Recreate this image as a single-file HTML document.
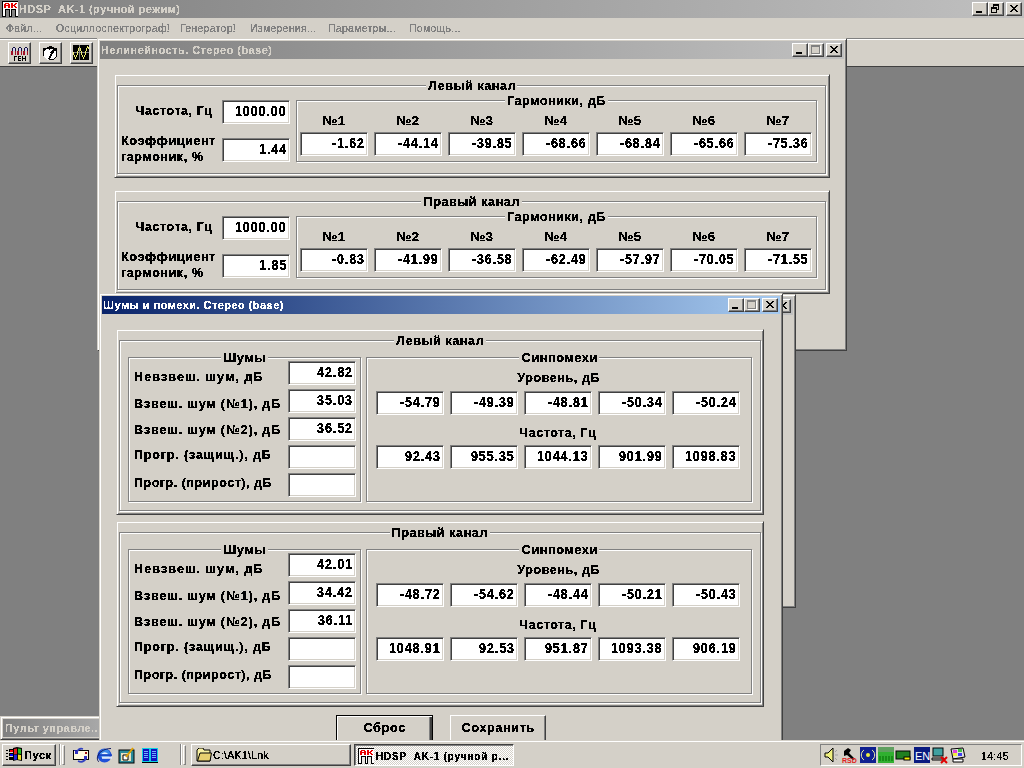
<!DOCTYPE html><html><head><meta charset="utf-8"><style>
*{box-sizing:content-box}
html,body{margin:0;padding:0}
body{width:1024px;height:768px;overflow:hidden;position:relative;background:#d4d0c8;font-family:"Liberation Sans",sans-serif;color:#000}
div{position:absolute}
i{font-style:normal;display:inline-block;white-space:pre}
.cb{width:14px;height:12px;background:#d4d0c8;border:1px solid;border-color:#fff #404040 #404040 #fff;box-shadow:inset -1px -1px #808080}
.ed{background:#fff;border:1px solid;border-color:#808080 #fff #fff #808080;box-shadow:inset 1px 1px #404040,inset -1px -1px #d4d0c8;font-weight:bold;font-size:14px;line-height:22px;text-align:right}
.ed span{filter:url(#crisp);position:absolute;right:3px;top:-1px}
.gt{text-align:center;font-weight:bold;font-size:13.5px;line-height:16px;height:16px}
.gt span{background:#d4d0c8;padding:0 2px;display:inline-block}.gt b{filter:url(#crisp);display:inline-block;font-weight:bold}
.lb{filter:url(#crisp);font-weight:bold;font-size:13.5px;line-height:16px;white-space:nowrap}
.cap{filter:url(#crisp3);font-weight:bold;font-size:11.8px;line-height:18px;white-space:nowrap}
.menu{filter:url(#crisp);font-size:11px;color:#808080;line-height:20px;top:18px}
</style></head><body>
<svg width="0" height="0" style="position:absolute"><filter id="crisp" color-interpolation-filters="sRGB"><feComponentTransfer><feFuncA type="discrete" tableValues="0 0 0 1 1 1 1 1 1 1"/></feComponentTransfer></filter><filter id="crisp2" color-interpolation-filters="sRGB"><feComponentTransfer><feFuncA type="discrete" tableValues="0 0 0 0 0 1 1 1 1 1"/></feComponentTransfer></filter><filter id="crisp3" color-interpolation-filters="sRGB"><feComponentTransfer><feFuncA type="discrete" tableValues="0 0 0 0 1 1 1 1 1 1"/></feComponentTransfer></filter></svg>

<div style="position:absolute;left:0px;top:0px;width:1024px;height:18px;background:linear-gradient(to right,#808080,#c0c0c0)"></div>
<svg style="position:absolute;left:2px;top:1px" width="16" height="16" shape-rendering="crispEdges"><rect x="1" y="1" width="15" height="14" fill="#fff"/><rect x="4" y="9" width="3" height="7" fill="#828282"/><rect x="10" y="9" width="3" height="7" fill="#828282"/><path d="M0 0h16v1H0zM0 0h1v16H0zM3 8h5v1H3zM3 8h1v8H3zM7 8h1v8H7zM9 8h5v1H9zM9 8h1v8H9zM13 8h1v8h-1zM0 15h4v1H0zM7 15h3v1H7zM13 15h3v1h-3z" fill="#000"/><path d="M3 2h1v1h-1zM4 2h1v1h-1zM5 2h1v1h-1zM6 2h1v1h-1zM2 3h1v1h-1zM3 3h1v1h-1zM6 3h1v1h-1zM7 3h1v1h-1zM2 4h1v1h-1zM3 4h1v1h-1zM4 4h1v1h-1zM5 4h1v1h-1zM6 4h1v1h-1zM7 4h1v1h-1zM2 5h1v1h-1zM3 5h1v1h-1zM6 5h1v1h-1zM7 5h1v1h-1zM2 6h1v1h-1zM3 6h1v1h-1zM6 6h1v1h-1zM7 6h1v1h-1zM9 2h1v1h-1zM10 2h1v1h-1zM13 2h1v1h-1zM14 2h1v1h-1zM9 3h1v1h-1zM10 3h1v1h-1zM12 3h1v1h-1zM13 3h1v1h-1zM9 4h1v1h-1zM10 4h1v1h-1zM11 4h1v1h-1zM12 4h1v1h-1zM9 5h1v1h-1zM10 5h1v1h-1zM12 5h1v1h-1zM13 5h1v1h-1zM9 6h1v1h-1zM10 6h1v1h-1zM13 6h1v1h-1zM14 6h1v1h-1z" fill="#e80000"/></svg>
<div class="cap" style="left:19px;top:0;color:#d4d0c8"><i style="letter-spacing:0.500px;transform:scaleX(0.9306);transform-origin:0 50%;margin-right:-12.035px">HDSP  AK-1 (ручной режим)</i></div>
<div class="cb" style="left:972px;top:2px"><svg width="16" height="14" style="position:absolute;left:-1px;top:-1px" shape-rendering="crispEdges"><rect x="4" y="9" width="6" height="2" fill="#000"/></svg></div>
<div class="cb" style="left:988px;top:2px"><svg width="16" height="14" style="position:absolute;left:-1px;top:-1px" shape-rendering="crispEdges"><path d="M5 2h1v1h-1zM6 2h1v1h-1zM7 2h1v1h-1zM8 2h1v1h-1zM9 2h1v1h-1zM10 2h1v1h-1zM5 3h1v1h-1zM6 3h1v1h-1zM7 3h1v1h-1zM8 3h1v1h-1zM9 3h1v1h-1zM10 3h1v1h-1zM5 4h1v1h-1zM10 4h1v1h-1zM3 5h1v1h-1zM4 5h1v1h-1zM5 5h1v1h-1zM6 5h1v1h-1zM7 5h1v1h-1zM8 5h1v1h-1zM10 5h1v1h-1zM3 6h1v1h-1zM4 6h1v1h-1zM5 6h1v1h-1zM6 6h1v1h-1zM7 6h1v1h-1zM8 6h1v1h-1zM10 6h1v1h-1zM3 7h1v1h-1zM8 7h1v1h-1zM9 7h1v1h-1zM10 7h1v1h-1zM3 8h1v1h-1zM8 8h1v1h-1zM3 9h1v1h-1zM8 9h1v1h-1zM3 10h1v1h-1zM4 10h1v1h-1zM5 10h1v1h-1zM6 10h1v1h-1zM7 10h1v1h-1zM8 10h1v1h-1z" fill="#000"/></svg></div>
<div class="cb" style="left:1006px;top:2px"><svg width="16" height="14" style="position:absolute;left:-1px;top:-1px" shape-rendering="crispEdges"><path d="M4 3h1v1h-1zM5 3h1v1h-1zM10 3h1v1h-1zM11 3h1v1h-1zM5 4h1v1h-1zM6 4h1v1h-1zM9 4h1v1h-1zM10 4h1v1h-1zM6 5h1v1h-1zM7 5h1v1h-1zM8 5h1v1h-1zM9 5h1v1h-1zM7 6h1v1h-1zM8 6h1v1h-1zM6 7h1v1h-1zM7 7h1v1h-1zM8 7h1v1h-1zM9 7h1v1h-1zM5 8h1v1h-1zM6 8h1v1h-1zM9 8h1v1h-1zM10 8h1v1h-1zM4 9h1v1h-1zM5 9h1v1h-1zM10 9h1v1h-1zM11 9h1v1h-1z" fill="#000"/></svg></div>
<div class="menu" style="left:6px"><i style="letter-spacing:0.300px;transform:scaleX(0.9527);transform-origin:0 50%;margin-right:-1.814px">Файл...</i></div>
<div class="menu" style="left:56px"><i style="letter-spacing:0.300px;transform:scaleX(0.9547);transform-origin:0 50%;margin-right:-5.414px">Осциллоспектрограф!</i></div>
<div class="menu" style="left:180px"><i style="letter-spacing:0.300px;transform:scaleX(0.9538);transform-origin:0 50%;margin-right:-2.714px">Генератор!</i></div>
<div class="menu" style="left:250px"><i style="letter-spacing:0.300px;transform:scaleX(0.9525);transform-origin:0 50%;margin-right:-3.314px">Измерения...</i></div>
<div class="menu" style="left:328px"><i style="letter-spacing:0.300px;transform:scaleX(0.9536);transform-origin:0 50%;margin-right:-3.314px">Параметры...</i></div>
<div class="menu" style="left:409px"><i style="letter-spacing:0.300px;transform:scaleX(0.9556);transform-origin:0 50%;margin-right:-2.413px">Помощь...</i></div>
<div style="position:absolute;left:0px;top:38px;width:1024px;height:1px;background:#808080"></div>
<div style="position:absolute;left:0px;top:39px;width:1024px;height:1px;background:#fff"></div>
<div style="left:8px;top:42px;width:21px;height:20px;border:1px solid;border-color:#fff #404040 #404040 #fff;box-shadow:inset -1px -1px #808080"></div>
<div style="left:39px;top:42px;width:21px;height:20px;border:1px solid;border-color:#fff #404040 #404040 #fff;box-shadow:inset -1px -1px #808080"></div>
<div style="left:70px;top:42px;width:21px;height:20px;border:1px solid;border-color:#fff #404040 #404040 #fff;box-shadow:inset -1px -1px #808080"></div>
<svg style="position:absolute;left:8px;top:42px" width="23" height="22" shape-rendering="crispEdges"><rect x="5" y="5" width="2" height="1" fill="#101040"/><rect x="4" y="6" width="1" height="3" fill="#101040"/><rect x="7" y="6" width="1" height="3" fill="#101040"/><rect x="5" y="6" width="2" height="3" fill="#d8d0f0"/><rect x="3" y="9" width="2" height="4" fill="#a01028"/><rect x="7" y="9" width="1" height="4" fill="#a01028"/><rect x="11" y="5" width="2" height="1" fill="#101040"/><rect x="10" y="6" width="1" height="3" fill="#101040"/><rect x="13" y="6" width="1" height="3" fill="#101040"/><rect x="11" y="6" width="2" height="3" fill="#d8d0f0"/><rect x="9" y="9" width="2" height="4" fill="#a01028"/><rect x="13" y="9" width="1" height="4" fill="#a01028"/><rect x="17" y="5" width="2" height="1" fill="#101040"/><rect x="16" y="6" width="1" height="3" fill="#101040"/><rect x="19" y="6" width="1" height="3" fill="#101040"/><rect x="17" y="6" width="2" height="3" fill="#d8d0f0"/><rect x="15" y="9" width="2" height="4" fill="#a01028"/><rect x="19" y="9" width="1" height="4" fill="#a01028"/><g fill="#000"><path d="M6 14h3v1H7v4H6z"/><path d="M10 14h3v1h-2v1h2v1h-2v1h2v1h-3z"/><path d="M14 14h1v2h2v-2h1v5h-1v-2h-2v2h-1z"/></g></svg>
<svg style="position:absolute;left:39px;top:42px" width="23" height="22" shape-rendering="crispEdges"><path d="M4 6h4v-1h2v-1h3v1h2v1h3v9h-1v1h-1v1h-1v1H8v-1H7v-1H6v-1H5v-1H4z" fill="#000"/><path d="M5 9h1v-1h1v-1h3v1h1v-1h3v1h-1v1h-1v1h-1v1h1v1h-1v2h-1v2h-1v1h1v1H8v-1H7v-1H6v-1H5z" fill="#fff"/><path d="M15 9h2v6h-1v1h-1v1h-4v-1h1v-2h1v-2h1v-1h1z" fill="#fff"/></svg>
<svg style="position:absolute;left:70px;top:42px" width="23" height="22" shape-rendering="crispEdges"><rect x="3" y="3" width="16" height="15" fill="#000"/><rect x="9" y="3" width="1" height="15" fill="#808080"/><rect x="3" y="10" width="16" height="1" fill="#808080"/><path d="M3 10h1v2h1v3h1v2h1v-2h1v-4h1v-4h1v-1h1v1h1v4h1v4h1v2h1v-2h1v-4h1v-4h1v-1h1v1h-1v0" fill="none"/><g fill="#f0f070"><path d="M3 10h1v3H3z"/><path d="M4 13h1v2H4z"/><path d="M5 15h1v2H5z"/><path d="M6 13h1v2H6z"/><path d="M7 9h1v4H7z"/><path d="M8 6h1v3H8z"/><path d="M9 5h1v1H9z"/><path d="M10 6h1v3h-1z"/><path d="M11 9h1v4h-1z"/><path d="M12 13h1v2h-1z"/><path d="M13 15h1v2h-1z"/><path d="M14 13h1v2h-1z"/><path d="M15 9h1v4h-1z"/><path d="M16 6h1v3h-1z"/><path d="M17 4h1v2h-1z"/><path d="M18 5h1v2h-1z"/></g></svg>
<div style="position:absolute;left:0px;top:66px;width:1024px;height:1px;background:#404040"></div>
<div style="position:absolute;left:0px;top:67px;width:1024px;height:674px;background:#808080"></div>
<div style="position:absolute;left:97px;top:38px;width:748px;height:311px;background:#d4d0c8;border:1px solid;border-color:#d4d0c8 #404040 #404040 #d4d0c8;box-shadow:inset 1px 1px #fff,inset -1px -1px #808080"></div>
<div style="position:absolute;left:100px;top:41px;width:744px;height:18px;background:linear-gradient(to right,#808080,#c0c0c0)"></div>
<div class="cap" style="left:101px;top:41px;color:#d4d0c8"><i style="letter-spacing:0.500px;transform:scaleX(0.9293);transform-origin:0 50%;margin-right:-13.035px">Нелинейность. Стерео (base)</i></div>
<div class="cb" style="left:826px;top:43px"><svg width="16" height="14" style="position:absolute;left:-1px;top:-1px" shape-rendering="crispEdges"><path d="M4 3h1v1h-1zM5 3h1v1h-1zM10 3h1v1h-1zM11 3h1v1h-1zM5 4h1v1h-1zM6 4h1v1h-1zM9 4h1v1h-1zM10 4h1v1h-1zM6 5h1v1h-1zM7 5h1v1h-1zM8 5h1v1h-1zM9 5h1v1h-1zM7 6h1v1h-1zM8 6h1v1h-1zM6 7h1v1h-1zM7 7h1v1h-1zM8 7h1v1h-1zM9 7h1v1h-1zM5 8h1v1h-1zM6 8h1v1h-1zM9 8h1v1h-1zM10 8h1v1h-1zM4 9h1v1h-1zM5 9h1v1h-1zM10 9h1v1h-1zM11 9h1v1h-1z" fill="#000"/></svg></div>
<div class="cb" style="left:808px;top:43px"><svg width="16" height="14" style="position:absolute;left:-1px;top:-1px" shape-rendering="crispEdges"><path d="M3 2h1v1h-1zM4 2h1v1h-1zM5 2h1v1h-1zM6 2h1v1h-1zM7 2h1v1h-1zM8 2h1v1h-1zM9 2h1v1h-1zM10 2h1v1h-1zM11 2h1v1h-1zM3 3h1v1h-1zM4 3h1v1h-1zM5 3h1v1h-1zM6 3h1v1h-1zM7 3h1v1h-1zM8 3h1v1h-1zM9 3h1v1h-1zM10 3h1v1h-1zM11 3h1v1h-1zM3 4h1v1h-1zM11 4h1v1h-1zM3 5h1v1h-1zM11 5h1v1h-1zM3 6h1v1h-1zM11 6h1v1h-1zM3 7h1v1h-1zM11 7h1v1h-1zM3 8h1v1h-1zM11 8h1v1h-1zM3 9h1v1h-1zM11 9h1v1h-1zM3 10h1v1h-1zM4 10h1v1h-1zM5 10h1v1h-1zM6 10h1v1h-1zM7 10h1v1h-1zM8 10h1v1h-1zM9 10h1v1h-1zM10 10h1v1h-1zM11 10h1v1h-1z" fill="#808080"/><path d="M12 3h1v1h-1zM12 4h1v1h-1zM12 5h1v1h-1zM12 6h1v1h-1zM12 7h1v1h-1zM12 8h1v1h-1zM12 9h1v1h-1zM12 10h1v1h-1zM4 11h1v1h-1zM5 11h1v1h-1zM6 11h1v1h-1zM7 11h1v1h-1zM8 11h1v1h-1zM9 11h1v1h-1zM10 11h1v1h-1zM11 11h1v1h-1zM12 11h1v1h-1z" fill="#fff"/></svg></div>
<div class="cb" style="left:792px;top:43px"><svg width="16" height="14" style="position:absolute;left:-1px;top:-1px" shape-rendering="crispEdges"><rect x="4" y="9" width="6" height="2" fill="#000"/></svg></div>
<div style="position:absolute;left:114px;top:74px;width:714px;height:102px;background:#d4d0c8;border:1px solid;border-color:#d4d0c8 #404040 #404040 #d4d0c8;box-shadow:inset 1px 1px #fff,inset -1px -1px #808080"></div>
<div style="position:absolute;left:117px;top:85px;width:707px;height:87px;border:1px solid #808080;box-shadow:1px 1px #fff,inset 1px 1px #fff"></div>
<div class="gt" style="left:117px;top:78px;width:709px"><span><b><i style="letter-spacing:0.600px;transform:translateX(0.281px) scaleX(0.9357);transform-origin:50% 50%;margin:0 -3.019px">Левый канал</i></b></span></div>
<div class="lb" style="left:100px;width:112px;text-align:right;top:103px"><i style="letter-spacing:0.600px;transform:translateX(0.556px) scaleX(0.9272);transform-origin:100% 50%;margin-left:-6.044px">Частота, Гц</i></div>
<div class="ed" style="left:222px;top:100px;width:66px;height:22px"><span><i style="letter-spacing:1.000px;transform:translateX(0.894px) scaleX(0.8940);transform-origin:100% 50%;margin-left:-6.106px">1000.00</i></span></div>
<div class="lb" style="left:121px;top:133px"><i style="letter-spacing:0.600px;transform:scaleX(0.9403);transform-origin:0 50%;margin-right:-6.036px">Коэффициент</i></div>
<div class="lb" style="left:121px;top:149px"><i style="letter-spacing:0.600px;transform:scaleX(0.9318);transform-origin:0 50%;margin-right:-6.041px">гармоник, %</i></div>
<div class="ed" style="left:222px;top:138px;width:66px;height:22px"><span><i style="letter-spacing:1.000px;transform:translateX(0.901px) scaleX(0.9008);transform-origin:100% 50%;margin-left:-3.099px">1.44</i></span></div>
<div style="position:absolute;left:296px;top:100px;width:519px;height:60px;border:1px solid #808080;box-shadow:1px 1px #fff,inset 1px 1px #fff"></div>
<div class="gt" style="left:296px;top:93px;width:521px"><span><b><i style="letter-spacing:0.600px;transform:translateX(0.280px) scaleX(0.9318);transform-origin:50% 50%;margin:0 -3.620px">Гармоники, дБ</i></b></span></div>
<div class="lb" style="left:300px;width:68px;text-align:center;top:113px"><i style="letter-spacing:0.600px;transform:translateX(0.292px) scaleX(0.9741);transform-origin:50% 50%;margin:0 -0.308px">№1</i></div>
<div class="ed" style="left:300px;top:132px;width:66px;height:22px"><span><i style="letter-spacing:1.000px;transform:translateX(0.889px) scaleX(0.8886);transform-origin:100% 50%;margin-left:-4.111px">-1.62</i></span></div>
<div class="lb" style="left:374px;width:68px;text-align:center;top:113px"><i style="letter-spacing:0.600px;transform:translateX(0.292px) scaleX(0.9741);transform-origin:50% 50%;margin:0 -0.308px">№2</i></div>
<div class="ed" style="left:374px;top:132px;width:66px;height:22px"><span><i style="letter-spacing:1.000px;transform:translateX(0.888px) scaleX(0.8882);transform-origin:100% 50%;margin-left:-5.112px">-44.14</i></span></div>
<div class="lb" style="left:448px;width:68px;text-align:center;top:113px"><i style="letter-spacing:0.600px;transform:translateX(0.292px) scaleX(0.9741);transform-origin:50% 50%;margin:0 -0.308px">№3</i></div>
<div class="ed" style="left:448px;top:132px;width:66px;height:22px"><span><i style="letter-spacing:1.000px;transform:translateX(0.888px) scaleX(0.8882);transform-origin:100% 50%;margin-left:-5.112px">-39.85</i></span></div>
<div class="lb" style="left:522px;width:68px;text-align:center;top:113px"><i style="letter-spacing:0.600px;transform:translateX(0.292px) scaleX(0.9741);transform-origin:50% 50%;margin:0 -0.308px">№4</i></div>
<div class="ed" style="left:522px;top:132px;width:66px;height:22px"><span><i style="letter-spacing:1.000px;transform:translateX(0.888px) scaleX(0.8882);transform-origin:100% 50%;margin-left:-5.112px">-68.66</i></span></div>
<div class="lb" style="left:596px;width:68px;text-align:center;top:113px"><i style="letter-spacing:0.600px;transform:translateX(0.292px) scaleX(0.9741);transform-origin:50% 50%;margin:0 -0.308px">№5</i></div>
<div class="ed" style="left:596px;top:132px;width:66px;height:22px"><span><i style="letter-spacing:1.000px;transform:translateX(0.888px) scaleX(0.8882);transform-origin:100% 50%;margin-left:-5.112px">-68.84</i></span></div>
<div class="lb" style="left:670px;width:68px;text-align:center;top:113px"><i style="letter-spacing:0.600px;transform:translateX(0.292px) scaleX(0.9741);transform-origin:50% 50%;margin:0 -0.308px">№6</i></div>
<div class="ed" style="left:670px;top:132px;width:66px;height:22px"><span><i style="letter-spacing:1.000px;transform:translateX(0.888px) scaleX(0.8882);transform-origin:100% 50%;margin-left:-5.112px">-65.66</i></span></div>
<div class="lb" style="left:744px;width:68px;text-align:center;top:113px"><i style="letter-spacing:0.600px;transform:translateX(0.292px) scaleX(0.9741);transform-origin:50% 50%;margin:0 -0.308px">№7</i></div>
<div class="ed" style="left:744px;top:132px;width:66px;height:22px"><span><i style="letter-spacing:1.000px;transform:translateX(0.888px) scaleX(0.8882);transform-origin:100% 50%;margin-left:-5.112px">-75.36</i></span></div>
<div style="position:absolute;left:114px;top:190px;width:714px;height:102px;background:#d4d0c8;border:1px solid;border-color:#d4d0c8 #404040 #404040 #d4d0c8;box-shadow:inset 1px 1px #fff,inset -1px -1px #808080"></div>
<div style="position:absolute;left:117px;top:201px;width:707px;height:87px;border:1px solid #808080;box-shadow:1px 1px #fff,inset 1px 1px #fff"></div>
<div class="gt" style="left:117px;top:194px;width:709px"><span><b><i style="letter-spacing:0.600px;transform:translateX(0.281px) scaleX(0.9356);transform-origin:50% 50%;margin:0 -3.319px">Правый канал</i></b></span></div>
<div class="lb" style="left:100px;width:112px;text-align:right;top:219px"><i style="letter-spacing:0.600px;transform:translateX(0.556px) scaleX(0.9272);transform-origin:100% 50%;margin-left:-6.044px">Частота, Гц</i></div>
<div class="ed" style="left:222px;top:216px;width:66px;height:22px"><span><i style="letter-spacing:1.000px;transform:translateX(0.894px) scaleX(0.8940);transform-origin:100% 50%;margin-left:-6.106px">1000.00</i></span></div>
<div class="lb" style="left:121px;top:249px"><i style="letter-spacing:0.600px;transform:scaleX(0.9403);transform-origin:0 50%;margin-right:-6.036px">Коэффициент</i></div>
<div class="lb" style="left:121px;top:265px"><i style="letter-spacing:0.600px;transform:scaleX(0.9318);transform-origin:0 50%;margin-right:-6.041px">гармоник, %</i></div>
<div class="ed" style="left:222px;top:254px;width:66px;height:22px"><span><i style="letter-spacing:1.000px;transform:translateX(0.901px) scaleX(0.9008);transform-origin:100% 50%;margin-left:-3.099px">1.85</i></span></div>
<div style="position:absolute;left:296px;top:216px;width:519px;height:60px;border:1px solid #808080;box-shadow:1px 1px #fff,inset 1px 1px #fff"></div>
<div class="gt" style="left:296px;top:209px;width:521px"><span><b><i style="letter-spacing:0.600px;transform:translateX(0.280px) scaleX(0.9318);transform-origin:50% 50%;margin:0 -3.620px">Гармоники, дБ</i></b></span></div>
<div class="lb" style="left:300px;width:68px;text-align:center;top:229px"><i style="letter-spacing:0.600px;transform:translateX(0.292px) scaleX(0.9741);transform-origin:50% 50%;margin:0 -0.308px">№1</i></div>
<div class="ed" style="left:300px;top:248px;width:66px;height:22px"><span><i style="letter-spacing:1.000px;transform:translateX(0.889px) scaleX(0.8886);transform-origin:100% 50%;margin-left:-4.111px">-0.83</i></span></div>
<div class="lb" style="left:374px;width:68px;text-align:center;top:229px"><i style="letter-spacing:0.600px;transform:translateX(0.292px) scaleX(0.9741);transform-origin:50% 50%;margin:0 -0.308px">№2</i></div>
<div class="ed" style="left:374px;top:248px;width:66px;height:22px"><span><i style="letter-spacing:1.000px;transform:translateX(0.888px) scaleX(0.8882);transform-origin:100% 50%;margin-left:-5.112px">-41.99</i></span></div>
<div class="lb" style="left:448px;width:68px;text-align:center;top:229px"><i style="letter-spacing:0.600px;transform:translateX(0.292px) scaleX(0.9741);transform-origin:50% 50%;margin:0 -0.308px">№3</i></div>
<div class="ed" style="left:448px;top:248px;width:66px;height:22px"><span><i style="letter-spacing:1.000px;transform:translateX(0.888px) scaleX(0.8882);transform-origin:100% 50%;margin-left:-5.112px">-36.58</i></span></div>
<div class="lb" style="left:522px;width:68px;text-align:center;top:229px"><i style="letter-spacing:0.600px;transform:translateX(0.292px) scaleX(0.9741);transform-origin:50% 50%;margin:0 -0.308px">№4</i></div>
<div class="ed" style="left:522px;top:248px;width:66px;height:22px"><span><i style="letter-spacing:1.000px;transform:translateX(0.888px) scaleX(0.8882);transform-origin:100% 50%;margin-left:-5.112px">-62.49</i></span></div>
<div class="lb" style="left:596px;width:68px;text-align:center;top:229px"><i style="letter-spacing:0.600px;transform:translateX(0.292px) scaleX(0.9741);transform-origin:50% 50%;margin:0 -0.308px">№5</i></div>
<div class="ed" style="left:596px;top:248px;width:66px;height:22px"><span><i style="letter-spacing:1.000px;transform:translateX(0.888px) scaleX(0.8882);transform-origin:100% 50%;margin-left:-5.112px">-57.97</i></span></div>
<div class="lb" style="left:670px;width:68px;text-align:center;top:229px"><i style="letter-spacing:0.600px;transform:translateX(0.292px) scaleX(0.9741);transform-origin:50% 50%;margin:0 -0.308px">№6</i></div>
<div class="ed" style="left:670px;top:248px;width:66px;height:22px"><span><i style="letter-spacing:1.000px;transform:translateX(0.888px) scaleX(0.8882);transform-origin:100% 50%;margin-left:-5.112px">-70.05</i></span></div>
<div class="lb" style="left:744px;width:68px;text-align:center;top:229px"><i style="letter-spacing:0.600px;transform:translateX(0.292px) scaleX(0.9741);transform-origin:50% 50%;margin:0 -0.308px">№7</i></div>
<div class="ed" style="left:744px;top:248px;width:66px;height:22px"><span><i style="letter-spacing:1.000px;transform:translateX(0.888px) scaleX(0.8882);transform-origin:100% 50%;margin-left:-5.112px">-71.55</i></span></div>
<div style="position:absolute;left:600px;top:294px;width:194px;height:312px;background:#d4d0c8;border:1px solid;border-color:#d4d0c8 #404040 #404040 #d4d0c8;box-shadow:inset 1px 1px #fff,inset -1px -1px #808080"></div>
<div style="position:absolute;left:603px;top:297px;width:190px;height:18px;background:linear-gradient(to right,#808080,#c0c0c0)"></div>
<div class="cap" style="left:604px;top:297px;color:#d4d0c8"><i style="letter-spacing:0.500px;transform:scaleX(1.0000);transform-origin:0 50%;margin-right:-0.000px"></i></div>
<div class="cb" style="left:775px;top:299px"><svg width="16" height="14" style="position:absolute;left:-1px;top:-1px" shape-rendering="crispEdges"><path d="M4 3h1v1h-1zM5 3h1v1h-1zM10 3h1v1h-1zM11 3h1v1h-1zM5 4h1v1h-1zM6 4h1v1h-1zM9 4h1v1h-1zM10 4h1v1h-1zM6 5h1v1h-1zM7 5h1v1h-1zM8 5h1v1h-1zM9 5h1v1h-1zM7 6h1v1h-1zM8 6h1v1h-1zM6 7h1v1h-1zM7 7h1v1h-1zM8 7h1v1h-1zM9 7h1v1h-1zM5 8h1v1h-1zM6 8h1v1h-1zM9 8h1v1h-1zM10 8h1v1h-1zM4 9h1v1h-1zM5 9h1v1h-1zM10 9h1v1h-1zM11 9h1v1h-1z" fill="#000"/></svg></div>
<div class="cb" style="left:757px;top:299px"><svg width="16" height="14" style="position:absolute;left:-1px;top:-1px" shape-rendering="crispEdges"><path d="M3 2h1v1h-1zM4 2h1v1h-1zM5 2h1v1h-1zM6 2h1v1h-1zM7 2h1v1h-1zM8 2h1v1h-1zM9 2h1v1h-1zM10 2h1v1h-1zM11 2h1v1h-1zM3 3h1v1h-1zM4 3h1v1h-1zM5 3h1v1h-1zM6 3h1v1h-1zM7 3h1v1h-1zM8 3h1v1h-1zM9 3h1v1h-1zM10 3h1v1h-1zM11 3h1v1h-1zM3 4h1v1h-1zM11 4h1v1h-1zM3 5h1v1h-1zM11 5h1v1h-1zM3 6h1v1h-1zM11 6h1v1h-1zM3 7h1v1h-1zM11 7h1v1h-1zM3 8h1v1h-1zM11 8h1v1h-1zM3 9h1v1h-1zM11 9h1v1h-1zM3 10h1v1h-1zM4 10h1v1h-1zM5 10h1v1h-1zM6 10h1v1h-1zM7 10h1v1h-1zM8 10h1v1h-1zM9 10h1v1h-1zM10 10h1v1h-1zM11 10h1v1h-1z" fill="#808080"/><path d="M12 3h1v1h-1zM12 4h1v1h-1zM12 5h1v1h-1zM12 6h1v1h-1zM12 7h1v1h-1zM12 8h1v1h-1zM12 9h1v1h-1zM12 10h1v1h-1zM4 11h1v1h-1zM5 11h1v1h-1zM6 11h1v1h-1zM7 11h1v1h-1zM8 11h1v1h-1zM9 11h1v1h-1zM10 11h1v1h-1zM11 11h1v1h-1zM12 11h1v1h-1z" fill="#fff"/></svg></div>
<div class="cb" style="left:741px;top:299px"><svg width="16" height="14" style="position:absolute;left:-1px;top:-1px" shape-rendering="crispEdges"><rect x="4" y="9" width="6" height="2" fill="#000"/></svg></div>
<div style="position:absolute;left:0px;top:716px;width:159px;height:22px;background:#d4d0c8;border:1px solid;border-color:#d4d0c8 #404040 #404040 #d4d0c8;box-shadow:inset 1px 1px #fff,inset -1px -1px #808080"></div>
<div style="position:absolute;left:3px;top:719px;width:155px;height:18px;background:linear-gradient(to right,#808080,#c0c0c0)"></div>
<div class="cap" style="left:5px;top:719px;color:#d4d0c8"><i style="letter-spacing:0.500px;transform:scaleX(0.9298);transform-origin:0 50%;margin-right:-7.035px">Пульт управле..</i></div>
<div style="position:absolute;left:99px;top:293px;width:682px;height:466px;background:#d4d0c8;border:1px solid;border-color:#d4d0c8 #404040 #404040 #d4d0c8;box-shadow:inset 1px 1px #fff,inset -1px -1px #808080"></div>
<div style="position:absolute;left:102px;top:296px;width:678px;height:18px;background:linear-gradient(to right,#0a246a,#a6caf0)"></div>
<div class="cap" style="left:103px;top:296px;color:#fff"><i style="letter-spacing:0.500px;transform:scaleX(0.9304);transform-origin:0 50%;margin-right:-13.535px">Шумы и помехи. Стерео (base)</i></div>
<div class="cb" style="left:762px;top:298px"><svg width="16" height="14" style="position:absolute;left:-1px;top:-1px" shape-rendering="crispEdges"><path d="M4 3h1v1h-1zM5 3h1v1h-1zM10 3h1v1h-1zM11 3h1v1h-1zM5 4h1v1h-1zM6 4h1v1h-1zM9 4h1v1h-1zM10 4h1v1h-1zM6 5h1v1h-1zM7 5h1v1h-1zM8 5h1v1h-1zM9 5h1v1h-1zM7 6h1v1h-1zM8 6h1v1h-1zM6 7h1v1h-1zM7 7h1v1h-1zM8 7h1v1h-1zM9 7h1v1h-1zM5 8h1v1h-1zM6 8h1v1h-1zM9 8h1v1h-1zM10 8h1v1h-1zM4 9h1v1h-1zM5 9h1v1h-1zM10 9h1v1h-1zM11 9h1v1h-1z" fill="#000"/></svg></div>
<div class="cb" style="left:744px;top:298px"><svg width="16" height="14" style="position:absolute;left:-1px;top:-1px" shape-rendering="crispEdges"><path d="M3 2h1v1h-1zM4 2h1v1h-1zM5 2h1v1h-1zM6 2h1v1h-1zM7 2h1v1h-1zM8 2h1v1h-1zM9 2h1v1h-1zM10 2h1v1h-1zM11 2h1v1h-1zM3 3h1v1h-1zM4 3h1v1h-1zM5 3h1v1h-1zM6 3h1v1h-1zM7 3h1v1h-1zM8 3h1v1h-1zM9 3h1v1h-1zM10 3h1v1h-1zM11 3h1v1h-1zM3 4h1v1h-1zM11 4h1v1h-1zM3 5h1v1h-1zM11 5h1v1h-1zM3 6h1v1h-1zM11 6h1v1h-1zM3 7h1v1h-1zM11 7h1v1h-1zM3 8h1v1h-1zM11 8h1v1h-1zM3 9h1v1h-1zM11 9h1v1h-1zM3 10h1v1h-1zM4 10h1v1h-1zM5 10h1v1h-1zM6 10h1v1h-1zM7 10h1v1h-1zM8 10h1v1h-1zM9 10h1v1h-1zM10 10h1v1h-1zM11 10h1v1h-1z" fill="#808080"/><path d="M12 3h1v1h-1zM12 4h1v1h-1zM12 5h1v1h-1zM12 6h1v1h-1zM12 7h1v1h-1zM12 8h1v1h-1zM12 9h1v1h-1zM12 10h1v1h-1zM4 11h1v1h-1zM5 11h1v1h-1zM6 11h1v1h-1zM7 11h1v1h-1zM8 11h1v1h-1zM9 11h1v1h-1zM10 11h1v1h-1zM11 11h1v1h-1zM12 11h1v1h-1z" fill="#fff"/></svg></div>
<div class="cb" style="left:728px;top:298px"><svg width="16" height="14" style="position:absolute;left:-1px;top:-1px" shape-rendering="crispEdges"><rect x="4" y="9" width="6" height="2" fill="#000"/></svg></div>
<div style="position:absolute;left:116px;top:329px;width:646px;height:184px;background:#d4d0c8;border:1px solid;border-color:#d4d0c8 #404040 #404040 #d4d0c8;box-shadow:inset 1px 1px #fff,inset -1px -1px #808080"></div>
<div style="position:absolute;left:119px;top:340px;width:640px;height:169px;border:1px solid #808080;box-shadow:1px 1px #fff,inset 1px 1px #fff"></div>
<div class="gt" style="left:119px;top:333px;width:642px"><span><b><i style="letter-spacing:0.600px;transform:translateX(0.281px) scaleX(0.9357);transform-origin:50% 50%;margin:0 -3.019px">Левый канал</i></b></span></div>
<div style="position:absolute;left:128px;top:357px;width:231px;height:143px;border:1px solid #808080;box-shadow:1px 1px #fff,inset 1px 1px #fff"></div>
<div class="gt" style="left:128px;top:350px;width:233px"><span><b><i style="letter-spacing:0.600px;transform:translateX(0.288px) scaleX(0.9593);transform-origin:50% 50%;margin:0 -0.912px">Шумы</i></b></span></div>
<div class="lb" style="left:134px;top:369px"><i style="letter-spacing:1.100px;transform:scaleX(0.9345);transform-origin:0 50%;margin-right:-9.072px">Невзвеш. шум, дБ</i></div>
<div class="ed" style="left:288px;top:361px;width:66px;height:22px"><span><i style="letter-spacing:1.000px;transform:translateX(0.898px) scaleX(0.8976);transform-origin:100% 50%;margin-left:-4.102px">42.82</i></span></div>
<div class="lb" style="left:134px;top:396px"><i style="letter-spacing:0.920px;transform:scaleX(0.9312);transform-origin:0 50%;margin-right:-10.863px">Взвеш. шум (№1), дБ</i></div>
<div class="ed" style="left:288px;top:389px;width:66px;height:22px"><span><i style="letter-spacing:1.000px;transform:translateX(0.898px) scaleX(0.8976);transform-origin:100% 50%;margin-left:-4.102px">35.03</i></span></div>
<div class="lb" style="left:134px;top:422px"><i style="letter-spacing:0.920px;transform:scaleX(0.9312);transform-origin:0 50%;margin-right:-10.863px">Взвеш. шум (№2), дБ</i></div>
<div class="ed" style="left:288px;top:417px;width:66px;height:22px"><span><i style="letter-spacing:1.000px;transform:translateX(0.898px) scaleX(0.8976);transform-origin:100% 50%;margin-left:-4.102px">36.52</i></span></div>
<div class="lb" style="left:134px;top:447px"><i style="letter-spacing:0.910px;transform:scaleX(0.9268);transform-origin:0 50%;margin-right:-10.867px">Прогр. (защищ.), дБ</i></div>
<div class="ed" style="left:288px;top:445px;width:66px;height:22px"><span></span></div>
<div class="lb" style="left:134px;top:475px"><i style="letter-spacing:0.600px;transform:scaleX(0.9234);transform-origin:0 50%;margin-right:-11.446px">Прогр. (прирост), дБ</i></div>
<div class="ed" style="left:288px;top:473px;width:66px;height:22px"><span></span></div>
<div style="position:absolute;left:366px;top:357px;width:384px;height:143px;border:1px solid #808080;box-shadow:1px 1px #fff,inset 1px 1px #fff"></div>
<div class="gt" style="left:366px;top:350px;width:386px"><span><b><i style="letter-spacing:0.600px;transform:translateX(0.282px) scaleX(0.9403);transform-origin:50% 50%;margin:0 -2.418px">Синпомехи</i></b></span></div>
<div class="lb" style="left:366px;width:384px;text-align:center;top:370px"><i style="letter-spacing:0.600px;transform:translateX(0.280px) scaleX(0.9320);transform-origin:50% 50%;margin:0 -3.020px">Уровень, дБ</i></div>
<div class="lb" style="left:366px;width:384px;text-align:center;top:425px"><i style="letter-spacing:0.600px;transform:translateX(0.278px) scaleX(0.9272);transform-origin:50% 50%;margin:0 -3.022px">Частота, Гц</i></div>
<div class="ed" style="left:376px;top:391px;width:66px;height:22px"><span><i style="letter-spacing:1.000px;transform:translateX(0.888px) scaleX(0.8882);transform-origin:100% 50%;margin-left:-5.112px">-54.79</i></span></div>
<div class="ed" style="left:376px;top:445px;width:66px;height:22px"><span><i style="letter-spacing:1.000px;transform:translateX(0.898px) scaleX(0.8976);transform-origin:100% 50%;margin-left:-4.102px">92.43</i></span></div>
<div class="ed" style="left:450px;top:391px;width:66px;height:22px"><span><i style="letter-spacing:1.000px;transform:translateX(0.888px) scaleX(0.8882);transform-origin:100% 50%;margin-left:-5.112px">-49.39</i></span></div>
<div class="ed" style="left:450px;top:445px;width:66px;height:22px"><span><i style="letter-spacing:1.000px;transform:translateX(0.895px) scaleX(0.8955);transform-origin:100% 50%;margin-left:-5.105px">955.35</i></span></div>
<div class="ed" style="left:524px;top:391px;width:66px;height:22px"><span><i style="letter-spacing:1.000px;transform:translateX(0.888px) scaleX(0.8882);transform-origin:100% 50%;margin-left:-5.112px">-48.81</i></span></div>
<div class="ed" style="left:524px;top:445px;width:66px;height:22px"><span><i style="letter-spacing:1.000px;transform:translateX(0.894px) scaleX(0.8940);transform-origin:100% 50%;margin-left:-6.106px">1044.13</i></span></div>
<div class="ed" style="left:598px;top:391px;width:66px;height:22px"><span><i style="letter-spacing:1.000px;transform:translateX(0.888px) scaleX(0.8882);transform-origin:100% 50%;margin-left:-5.112px">-50.34</i></span></div>
<div class="ed" style="left:598px;top:445px;width:66px;height:22px"><span><i style="letter-spacing:1.000px;transform:translateX(0.895px) scaleX(0.8955);transform-origin:100% 50%;margin-left:-5.105px">901.99</i></span></div>
<div class="ed" style="left:672px;top:391px;width:66px;height:22px"><span><i style="letter-spacing:1.000px;transform:translateX(0.888px) scaleX(0.8882);transform-origin:100% 50%;margin-left:-5.112px">-50.24</i></span></div>
<div class="ed" style="left:672px;top:445px;width:66px;height:22px"><span><i style="letter-spacing:1.000px;transform:translateX(0.894px) scaleX(0.8940);transform-origin:100% 50%;margin-left:-6.106px">1098.83</i></span></div>
<div style="position:absolute;left:116px;top:521px;width:646px;height:184px;background:#d4d0c8;border:1px solid;border-color:#d4d0c8 #404040 #404040 #d4d0c8;box-shadow:inset 1px 1px #fff,inset -1px -1px #808080"></div>
<div style="position:absolute;left:119px;top:532px;width:640px;height:169px;border:1px solid #808080;box-shadow:1px 1px #fff,inset 1px 1px #fff"></div>
<div class="gt" style="left:119px;top:525px;width:642px"><span><b><i style="letter-spacing:0.600px;transform:translateX(0.281px) scaleX(0.9356);transform-origin:50% 50%;margin:0 -3.319px">Правый канал</i></b></span></div>
<div style="position:absolute;left:128px;top:549px;width:231px;height:143px;border:1px solid #808080;box-shadow:1px 1px #fff,inset 1px 1px #fff"></div>
<div class="gt" style="left:128px;top:542px;width:233px"><span><b><i style="letter-spacing:0.600px;transform:translateX(0.288px) scaleX(0.9593);transform-origin:50% 50%;margin:0 -0.912px">Шумы</i></b></span></div>
<div class="lb" style="left:134px;top:561px"><i style="letter-spacing:1.100px;transform:scaleX(0.9345);transform-origin:0 50%;margin-right:-9.072px">Невзвеш. шум, дБ</i></div>
<div class="ed" style="left:288px;top:553px;width:66px;height:22px"><span><i style="letter-spacing:1.000px;transform:translateX(0.898px) scaleX(0.8976);transform-origin:100% 50%;margin-left:-4.102px">42.01</i></span></div>
<div class="lb" style="left:134px;top:588px"><i style="letter-spacing:0.920px;transform:scaleX(0.9312);transform-origin:0 50%;margin-right:-10.863px">Взвеш. шум (№1), дБ</i></div>
<div class="ed" style="left:288px;top:581px;width:66px;height:22px"><span><i style="letter-spacing:1.000px;transform:translateX(0.898px) scaleX(0.8976);transform-origin:100% 50%;margin-left:-4.102px">34.42</i></span></div>
<div class="lb" style="left:134px;top:614px"><i style="letter-spacing:0.920px;transform:scaleX(0.9312);transform-origin:0 50%;margin-right:-10.863px">Взвеш. шум (№2), дБ</i></div>
<div class="ed" style="left:288px;top:609px;width:66px;height:22px"><span><i style="letter-spacing:1.000px;transform:translateX(0.895px) scaleX(0.8955);transform-origin:100% 50%;margin-left:-4.105px">36.11</i></span></div>
<div class="lb" style="left:134px;top:639px"><i style="letter-spacing:0.910px;transform:scaleX(0.9268);transform-origin:0 50%;margin-right:-10.867px">Прогр. (защищ.), дБ</i></div>
<div class="ed" style="left:288px;top:637px;width:66px;height:22px"><span></span></div>
<div class="lb" style="left:134px;top:667px"><i style="letter-spacing:0.600px;transform:scaleX(0.9234);transform-origin:0 50%;margin-right:-11.446px">Прогр. (прирост), дБ</i></div>
<div class="ed" style="left:288px;top:665px;width:66px;height:22px"><span></span></div>
<div style="position:absolute;left:366px;top:549px;width:384px;height:143px;border:1px solid #808080;box-shadow:1px 1px #fff,inset 1px 1px #fff"></div>
<div class="gt" style="left:366px;top:542px;width:386px"><span><b><i style="letter-spacing:0.600px;transform:translateX(0.282px) scaleX(0.9403);transform-origin:50% 50%;margin:0 -2.418px">Синпомехи</i></b></span></div>
<div class="lb" style="left:366px;width:384px;text-align:center;top:562px"><i style="letter-spacing:0.600px;transform:translateX(0.280px) scaleX(0.9320);transform-origin:50% 50%;margin:0 -3.020px">Уровень, дБ</i></div>
<div class="lb" style="left:366px;width:384px;text-align:center;top:617px"><i style="letter-spacing:0.600px;transform:translateX(0.278px) scaleX(0.9272);transform-origin:50% 50%;margin:0 -3.022px">Частота, Гц</i></div>
<div class="ed" style="left:376px;top:583px;width:66px;height:22px"><span><i style="letter-spacing:1.000px;transform:translateX(0.888px) scaleX(0.8882);transform-origin:100% 50%;margin-left:-5.112px">-48.72</i></span></div>
<div class="ed" style="left:376px;top:637px;width:66px;height:22px"><span><i style="letter-spacing:1.000px;transform:translateX(0.894px) scaleX(0.8940);transform-origin:100% 50%;margin-left:-6.106px">1048.91</i></span></div>
<div class="ed" style="left:450px;top:583px;width:66px;height:22px"><span><i style="letter-spacing:1.000px;transform:translateX(0.888px) scaleX(0.8882);transform-origin:100% 50%;margin-left:-5.112px">-54.62</i></span></div>
<div class="ed" style="left:450px;top:637px;width:66px;height:22px"><span><i style="letter-spacing:1.000px;transform:translateX(0.898px) scaleX(0.8976);transform-origin:100% 50%;margin-left:-4.102px">92.53</i></span></div>
<div class="ed" style="left:524px;top:583px;width:66px;height:22px"><span><i style="letter-spacing:1.000px;transform:translateX(0.888px) scaleX(0.8882);transform-origin:100% 50%;margin-left:-5.112px">-48.44</i></span></div>
<div class="ed" style="left:524px;top:637px;width:66px;height:22px"><span><i style="letter-spacing:1.000px;transform:translateX(0.895px) scaleX(0.8955);transform-origin:100% 50%;margin-left:-5.105px">951.87</i></span></div>
<div class="ed" style="left:598px;top:583px;width:66px;height:22px"><span><i style="letter-spacing:1.000px;transform:translateX(0.888px) scaleX(0.8882);transform-origin:100% 50%;margin-left:-5.112px">-50.21</i></span></div>
<div class="ed" style="left:598px;top:637px;width:66px;height:22px"><span><i style="letter-spacing:1.000px;transform:translateX(0.894px) scaleX(0.8940);transform-origin:100% 50%;margin-left:-6.106px">1093.38</i></span></div>
<div class="ed" style="left:672px;top:583px;width:66px;height:22px"><span><i style="letter-spacing:1.000px;transform:translateX(0.888px) scaleX(0.8882);transform-origin:100% 50%;margin-left:-5.112px">-50.43</i></span></div>
<div class="ed" style="left:672px;top:637px;width:66px;height:22px"><span><i style="letter-spacing:1.000px;transform:translateX(0.895px) scaleX(0.8955);transform-origin:100% 50%;margin-left:-5.105px">906.19</i></span></div>
<div style="left:336px;top:715px;width:95px;height:40px;border:1px solid #000;box-shadow:inset 1px 1px #fff,inset -2px -2px #404040,inset -3px -3px #808080;background:#d4d0c8"></div>
<div class="lb" style="left:336px;width:97px;text-align:center;top:720px"><i style="letter-spacing:0.600px;transform:translateX(0.284px) scaleX(0.9456);transform-origin:50% 50%;margin:0 -1.216px">Сброс</i></div>
<div style="left:450px;top:715px;width:94px;height:40px;border:1px solid;border-color:#fff #404040 #404040 #fff;box-shadow:inset -1px -1px #808080;background:#d4d0c8"></div>
<div class="lb" style="left:450px;width:96px;text-align:center;top:720px"><i style="letter-spacing:0.600px;transform:translateX(0.281px) scaleX(0.9377);transform-origin:50% 50%;margin:0 -2.419px">Сохранить</i></div>
<div style="position:absolute;left:0px;top:740px;width:1024px;height:28px;background:#d4d0c8"></div>
<div style="position:absolute;left:0px;top:741px;width:1024px;height:1px;background:#fff"></div>
<div style="left:2px;top:744px;width:52px;height:20px;border:1px solid;border-color:#fff #404040 #404040 #fff;box-shadow:inset -1px -1px #808080;background:#d4d0c8"></div>
<svg style="position:absolute;left:6px;top:747px" width="17" height="15"><path d="M0 3h2v1H0zM0 6h2v1H0zM0 9h2v1H0zM0 12h2v1H0z" fill="#000"/><path d="M3 2h4v3H3zM3 6h4v3H3zM3 10h4v3H3z" fill="#000"/><path d="M4 3h3v2H4z" fill="#f00"/><path d="M4 7h3v2H4z" fill="#00f"/><path d="M7 1l4-1 5 1v13l-5-1-4 1z" fill="#000"/><path d="M8 2l3-.5v5.5l-3 .5z" fill="#e02020"/><path d="M12 1.5l3 .5v5l-3-.5z" fill="#20c020"/><path d="M8 8l3-.5v5l-3 .5z" fill="#2020e0"/><path d="M12 7.5l3 .5v5l-3-.5z" fill="#f0e020"/></svg>
<div class="cap" style="left:24px;top:746px;color:#000;line-height:18px;filter:url(#crisp)"><i style="letter-spacing:0.500px;transform:scaleX(0.9478);transform-origin:0 50%;margin-right:-1.526px">Пуск</i></div>
<div style="position:absolute;left:59px;top:744px;width:1px;height:21px;background:#808080"></div>
<div style="position:absolute;left:60px;top:744px;width:1px;height:21px;background:#fff"></div>
<div style="left:62px;top:745px;width:1px;height:18px;border:1px solid;border-color:#fff #808080 #808080 #fff"></div>
<svg style="position:absolute;left:72px;top:747px" width="90" height="17"><rect x="1.5" y="3.5" width="15" height="9" fill="#fffbe0" stroke="#000"/><rect x="13" y="5" width="2" height="2" fill="#a01010"/><path d="M4.5 5.5Q7 0.5 11 2" stroke="#3040c0" stroke-width="1.6" fill="none"/><path d="M2 3h3v1H4v2H3V4H2z" fill="#2020a0"/><path d="M3 4h3v3H3z" fill="#3030c0"/><path d="M14 11.5Q11 16.5 6 14" stroke="#3040c0" stroke-width="1.6" fill="none"/><path d="M12 9h3v3h-3z" fill="#3030c0"/><circle cx="32.5" cy="8.5" r="7" fill="#2050d8"/><circle cx="33" cy="7" r="5" fill="#3a8ae8"/><path d="M29 7.2Q32.5 3.2 36.5 7.2Z" fill="#e8f4ff"/><rect x="26" y="7.3" width="14" height="1.6" fill="#1840c0"/><rect x="30" y="9.6" width="10" height="2.2" fill="#e0e8f8"/><path d="M27 15C23 12 26 2 39 1.5" stroke="#101860" stroke-width="1" fill="none"/><rect x="47" y="3" width="15" height="13" fill="#2a8a9a" stroke="#000"/><path d="M49 6h10v8H49z" fill="#e8e0c0"/><path d="M51 8h5v5h-5z" fill="#fff" stroke="#000"/><path d="M54 10l7-9" stroke="#e0a000" stroke-width="2"/><rect x="70" y="1" width="16" height="14" fill="#10d0e0"/><rect x="71" y="2" width="6" height="12" fill="#1010c0"/><rect x="79" y="2" width="6" height="12" fill="#1010c0"/><path d="M72 4.5h4M72 6.5h4M72 8.5h4M72 10.5h4M80 4.5h4M80 6.5h4M80 8.5h4M80 10.5h4" stroke="#70b0ff"/><rect x="70" y="15" width="16" height="1" fill="#000"/></svg>
<div style="position:absolute;left:180px;top:744px;width:1px;height:21px;background:#808080"></div>
<div style="position:absolute;left:181px;top:744px;width:1px;height:21px;background:#fff"></div>
<div style="left:183px;top:745px;width:1px;height:18px;border:1px solid;border-color:#fff #808080 #808080 #fff"></div>
<div style="left:191px;top:744px;width:158px;height:20px;border:1px solid;border-color:#fff #404040 #404040 #fff;box-shadow:inset -1px -1px #808080;background:#d4d0c8"></div>
<svg style="position:absolute;left:196px;top:748px" width="16" height="14"><path d="M1 2L3 0H7L8 2H14V13H1Z" fill="#f8f0a0" stroke="#000" stroke-width="1"/><path d="M1.5 13L4 5H15.5L14 13Z" fill="#e8d070" stroke="#000"/></svg>
<div style="filter:url(#crisp);left:213px;top:746px;font-size:11px;line-height:18px;white-space:nowrap"><i style="letter-spacing:0.300px;transform:scaleX(0.9537);transform-origin:0 50%;margin-right:-2.714px">C:\AK1\Lnk</i></div>
<div style="left:354px;top:744px;width:158px;height:20px;border:1px solid;border-color:#404040 #fff #fff #404040;box-shadow:inset 1px 1px #808080;background:repeating-conic-gradient(#fff 0 25%,#d4d0c8 0 50%) 0 0/2px 2px"></div>
<svg style="position:absolute;left:358px;top:748px" width="16" height="16" shape-rendering="crispEdges"><rect x="1" y="1" width="15" height="14" fill="#fff"/><rect x="4" y="9" width="3" height="7" fill="#eae8e4"/><rect x="10" y="9" width="3" height="7" fill="#eae8e4"/><path d="M0 0h16v1H0zM0 0h1v16H0zM3 8h5v1H3zM3 8h1v8H3zM7 8h1v8H7zM9 8h5v1H9zM9 8h1v8H9zM13 8h1v8h-1zM0 15h4v1H0zM7 15h3v1H7zM13 15h3v1h-3z" fill="#000"/><path d="M3 2h1v1h-1zM4 2h1v1h-1zM5 2h1v1h-1zM6 2h1v1h-1zM2 3h1v1h-1zM3 3h1v1h-1zM6 3h1v1h-1zM7 3h1v1h-1zM2 4h1v1h-1zM3 4h1v1h-1zM4 4h1v1h-1zM5 4h1v1h-1zM6 4h1v1h-1zM7 4h1v1h-1zM2 5h1v1h-1zM3 5h1v1h-1zM6 5h1v1h-1zM7 5h1v1h-1zM2 6h1v1h-1zM3 6h1v1h-1zM6 6h1v1h-1zM7 6h1v1h-1zM9 2h1v1h-1zM10 2h1v1h-1zM13 2h1v1h-1zM14 2h1v1h-1zM9 3h1v1h-1zM10 3h1v1h-1zM12 3h1v1h-1zM13 3h1v1h-1zM9 4h1v1h-1zM10 4h1v1h-1zM11 4h1v1h-1zM12 4h1v1h-1zM9 5h1v1h-1zM10 5h1v1h-1zM12 5h1v1h-1zM13 5h1v1h-1zM9 6h1v1h-1zM10 6h1v1h-1zM13 6h1v1h-1zM14 6h1v1h-1z" fill="#e80000"/></svg>
<div class="cap" style="left:376px;top:747px;color:#000;line-height:18px;font-size:11.5px;filter:url(#crisp)"><i style="letter-spacing:1.000px;transform:scaleX(0.8577);transform-origin:0 50%;margin-right:-22.142px">HDSP  AK-1 (ручной р...</i></div>
<div style="left:820px;top:744px;width:200px;height:20px;border:1px solid;border-color:#808080 #fff #fff #808080"></div>
<svg style="position:absolute;left:823px;top:747px" width="145" height="17"><path d="M2 6h3l5-5v14l-5-5H2z" fill="#f0f080" stroke="#000"/><path d="M12 5l2-2M12 8h3M12 11l2 2" stroke="#a0a0a0"/><path d="M21 4l4-3 3 2-2 3 6 6-2 1-6-5-3 1z" fill="#000"/><text x="19" y="16" font-size="7" font-weight="bold" fill="#e02020" font-family="Liberation Sans">RSD</text><rect x="37" y="0" width="16" height="16" fill="#102090"/><circle cx="45" cy="8" r="2" fill="#f0f040"/><path d="M41 3a6 6 0 0 0 0 10M49 3a6 6 0 0 1 0 10" stroke="#f0f0a0" fill="none"/><rect x="55" y="0" width="16" height="16" fill="#30b030"/><rect x="55" y="0" width="16" height="5" fill="#60a060"/><path d="M57 9v5M60 9v5M63 9v5M66 9v5M69 9v5" stroke="#108010" stroke-width="1.5"/><rect x="73" y="4" width="14" height="8" fill="#208020" stroke="#000"/><rect x="81" y="10" width="6" height="3" fill="#f0f000" stroke="#000"/><rect x="91" y="0" width="16" height="16" fill="#0a1a80"/><text x="92" y="13" font-size="11" fill="#fff" font-family="Liberation Sans">EN</text><rect x="110" y="1" width="10" height="8" fill="#40a0a0" stroke="#000"/><path d="M109 11h12v2h-12z" fill="#c0c0c0" stroke="#000"/><path d="M118 10l6 6M124 10l-6 6" stroke="#e00000" stroke-width="2"/><path d="M128 2l12-1 2 9-12 2z" fill="#e0e0e0" stroke="#000"/><rect x="130" y="3" width="4" height="3" fill="#e040e0"/><rect x="135" y="2" width="4" height="3" fill="#40c040"/><rect x="130" y="6" width="4" height="3" fill="#f0f040"/><rect x="135" y="6" width="4" height="3" fill="#4040f0"/><path d="M130 12h10v3h-10z" fill="#fff" stroke="#000"/></svg>
<div style="filter:url(#crisp);left:981px;top:747px;font-size:11px;line-height:18px;white-space:nowrap"><i style="letter-spacing:0.300px;transform:scaleX(0.9582);transform-origin:0 50%;margin-right:-1.213px">14:45</i></div>
</body></html>
